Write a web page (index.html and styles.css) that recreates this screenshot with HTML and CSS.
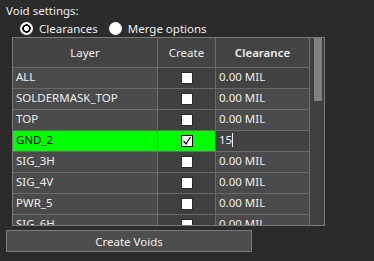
FILE: index.html
```html
<!DOCTYPE html>
<html lang="en">
<head>
  <meta charset="UTF-8">
  <title>Void settings</title>
  <link rel="stylesheet" href="styles.css">
</head>
<body>
  <div class="panel">
    <div class="titulo">Void settings:</div>

    <div class="radios">
      <label class="radio"><span class="punto activo"></span>Clearances</label>
      <label class="radio"><span class="punto"></span>Merge options</label>
    </div>

    <div class="marco">
      <div class="tabla">
        <div class="fila cabecera">
          <div class="celda">Layer</div>
          <div class="celda">Create</div>
          <div class="celda fuerte">Clearance</div>
        </div>
        <div class="fila">
          <div class="celda capa">ALL</div>
          <div class="celda crear"><span class="check"></span></div>
          <div class="celda valor oscuro">0.00 MIL</div>
        </div>
        <div class="fila">
          <div class="celda capa">SOLDERMASK_TOP</div>
          <div class="celda crear"><span class="check"></span></div>
          <div class="celda valor">0.00 MIL</div>
        </div>
        <div class="fila">
          <div class="celda capa">TOP</div>
          <div class="celda crear"><span class="check"></span></div>
          <div class="celda valor">0.00 MIL</div>
        </div>
        <div class="fila marcada">
          <div class="celda capa">GND_2</div>
          <div class="celda crear">
            <span class="check">
              <svg width="10" height="10" viewBox="0 0 10 10"><polyline points="1.5,5 4,8 8.5,1" fill="none" stroke="#000" stroke-width="1.2"/></svg>
            </span>
          </div>
          <div class="celda valor oscuro">15<span class="cursor"></span></div>
        </div>
        <div class="fila">
          <div class="celda capa">SIG_3H</div>
          <div class="celda crear"><span class="check"></span></div>
          <div class="celda valor">0.00 MIL</div>
        </div>
        <div class="fila">
          <div class="celda capa">SIG_4V</div>
          <div class="celda crear"><span class="check"></span></div>
          <div class="celda valor">0.00 MIL</div>
        </div>
        <div class="fila">
          <div class="celda capa">PWR_5</div>
          <div class="celda crear"><span class="check"></span></div>
          <div class="celda valor">0.00 MIL</div>
        </div>
        <div class="fila">
          <div class="celda capa">SIG_6H</div>
          <div class="celda crear"><span class="check"></span></div>
          <div class="celda valor">0.00 MIL</div>
        </div>
      </div>
      <div class="barra"><div class="pulgar"></div></div>
    </div>

    <button class="boton">Create Voids</button>
  </div>
</body>
</html>
```

FILE: styles.css
```css
* {
  box-sizing: border-box;
}

body {
  margin: 0;
  background: #2b2b2b;
  font-family: "Noto Sans", "Open Sans", sans-serif;
  font-size: 11.5px;
  color: #eeeeee;
}

.panel {
  padding: 3px 0 0 6px;
  width: 374px;
  height: 261px;
}

.titulo {
  line-height: 16px;
  height: 16px;
}

.radios {
  display: flex;
  align-items: center;
  height: 18px;
  padding-left: 14px;
  gap: 11px;
}

.radio {
  display: flex;
  align-items: center;
  gap: 6px;
}

.punto {
  width: 13px;
  height: 13px;
  border-radius: 50%;
  background: #fff;
  display: inline-block;
}

.punto.activo {
  background: radial-gradient(circle, #fff 0 2.2px, #000 2.7px 4px, #fff 4.5px);
}

/* tabla */
.marco {
  margin-left: 6px;
  width: 313px;
  height: 189px;
  border: 1px solid #7a7a7a;
  display: flex;
  overflow: hidden;
}

.tabla {
  width: 297px;
  overflow: hidden;
}

.fila {
  display: grid;
  grid-template-columns: 145px 58px 94px;
  height: 21px;
}

.celda {
  border-right: 1px solid #6a6a6a;
  border-bottom: 1px solid #6a6a6a;
  background: #4b4b4b;
  line-height: 16px;
  padding: 1px 3px 0;
  white-space: nowrap;
  overflow: hidden;
}

.cabecera {
  height: 30px;
}

.cabecera .celda {
  background: #434343;
  text-align: center;
  line-height: 29px;
  padding: 0;
}

.fuerte {
  font-weight: 600;
}

.crear {
  background: #3f3f3f;
  display: flex;
  justify-content: center;
  align-items: center;
  padding: 0;
}

.valor.oscuro {
  background: #424242;
}

.marcada .capa,
.marcada .crear {
  background: #00ff00;
  color: #000;
}

.check {
  width: 12px;
  height: 12px;
  background: #fff;
  border: 1px solid #2a2a2a;
  display: flex;
  align-items: center;
  justify-content: center;
}

.marcada .check {
  border-color: #000;
}

.cursor {
  display: inline-block;
  width: 1px;
  height: 14px;
  background: #eee;
  vertical-align: -3px;
}

.barra {
  width: 14px;
  background: #404040;
  padding: 0 1px 0 4px;
}

.pulgar {
  width: 8px;
  height: 63px;
  background: #808080;
}

.boton {
  margin-top: 4px;
  width: 246px;
  height: 22px;
  background: #4d4d4d;
  border: 1px solid #7a7a7a;
  color: #eeeeee;
  font-family: "Noto Sans", "Open Sans", sans-serif;
  font-size: 11.5px;
  padding: 0;
}
```
